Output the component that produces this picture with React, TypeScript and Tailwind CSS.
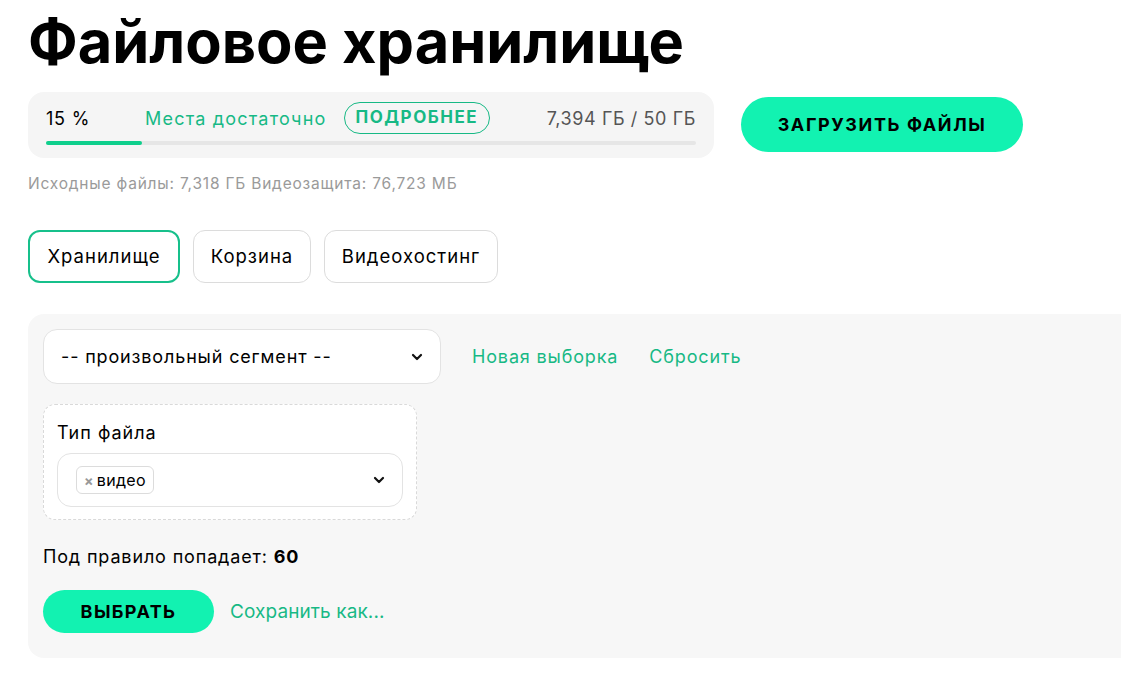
import React from "react";

const Chevron = () => (
  <svg width="12" height="8" viewBox="0 0 12 8" fill="none">
    <path d="M2 2l4 4 4-4" stroke="#111" strokeWidth="2.2" strokeLinecap="round" strokeLinejoin="round" />
  </svg>
);

export default function App() {
  return (
    <div className="min-h-[678px] w-[1121px] overflow-hidden bg-white text-black" style={{ fontFamily: "Inter, 'Open Sans', sans-serif" }}>
      <div className="pl-[28px] pt-[7px]">
        <h1 className="text-[59.5px] font-bold leading-[69px] tracking-[0px]">Файловое хранилище</h1>

        <div className="mt-[16px] flex items-start gap-[27px]">
          <div className="w-[686px] h-[66px] rounded-[16px] bg-[#f5f5f5] px-[18px] pt-[13px]">
            <div className="flex items-center h-[26px] tracking-[0.8px]">
              <span className="text-[18px] w-[99px]">15 %</span>
              <span className="text-[18px] text-[#17b985] tracking-[1.2px]">Места достаточно</span>
              <span className="ml-[17px] h-[32px] px-[11px] flex items-center rounded-full border border-[#17b985] text-[#17b985] font-bold text-[17px] tracking-[1.5px]">ПОДРОБНЕЕ</span>
              <span className="ml-auto text-[18px] text-[#555] tracking-[0.6px]">7,394 ГБ / 50 ГБ</span>
            </div>
            <div className="mt-[10px] h-[4px] rounded-full bg-[#e6e6e6]">
              <div className="h-[4px] w-[96px] rounded-full bg-[#0fcf8c]" />
            </div>
          </div>
          <button className="mt-[5px] h-[55px] w-[282px] rounded-full bg-[#12f2b1] text-[18px] font-bold tracking-[1.6px]">ЗАГРУЗИТЬ ФАЙЛЫ</button>
        </div>

        <div className="mt-[14px] text-[15.5px] text-[#9a9a9a] tracking-[0.8px]">Исходные файлы: 7,318 ГБ Видеозащита: 76,723 МБ</div>

        <div className="mt-[35px] flex gap-[13px] text-[18.5px] tracking-[1px]">
          <div className="h-[53px] w-[152px] rounded-[12px] border-2 border-[#17c08b] flex items-center justify-center">Хранилище</div>
          <div className="h-[53px] w-[118px] rounded-[12px] border border-[#dcdcdc] flex items-center justify-center">Корзина</div>
          <div className="h-[53px] w-[174px] rounded-[12px] border border-[#dcdcdc] flex items-center justify-center">Видеохостинг</div>
        </div>

        <div className="mt-[31px] h-[344px] rounded-l-[16px] bg-[#f7f7f7] px-[15px] pt-[15px]">
          <div className="flex items-center text-[18px] tracking-[0.85px]">
            <div className="h-[55px] w-[398px] rounded-[14px] border border-[#e3e3e3] bg-white flex items-center pl-[17px] pr-[17px]">
              <span>-- произвольный сегмент --</span>
              <span className="ml-auto"><Chevron /></span>
            </div>
            <span className="ml-[31px] text-[#17b985]">Новая выборка</span>
            <span className="ml-[31px] text-[#17b985]">Сбросить</span>
          </div>

          <div className="mt-[20px] w-[374px] h-[116px] rounded-[12px] border border-dashed border-[#d9d9d9] bg-white px-[13px] pt-[16px]">
            <div className="text-[18px] leading-[24px] tracking-[1px]">Тип файла</div>
            <div className="mt-[8px] h-[54px] rounded-[14px] border border-[#e3e3e3] flex items-center pl-[18px] pr-[17px]">
              <span className="h-[28px] px-[7px] rounded-[6px] border border-[#dcdcdc] flex items-center gap-[3px] text-[16px] tracking-[0.3px]">
                <span className="text-[#999] text-[14px] font-bold">×</span>видео
              </span>
              <span className="ml-auto"><Chevron /></span>
            </div>
          </div>

          <div className="mt-[23px] text-[18px] tracking-[0.85px]">Под правило попадает: <b>60</b></div>

          <div className="mt-[20px] flex items-center">
            <button className="h-[43px] w-[171px] rounded-full bg-[#12f2b1] text-[18px] font-bold tracking-[1.4px]">ВЫБРАТЬ</button>
            <span className="ml-[16px] text-[19px] text-[#17b985] tracking-[0.1px]">Сохранить как...</span>
          </div>
        </div>
      </div>
    </div>
  );
}
